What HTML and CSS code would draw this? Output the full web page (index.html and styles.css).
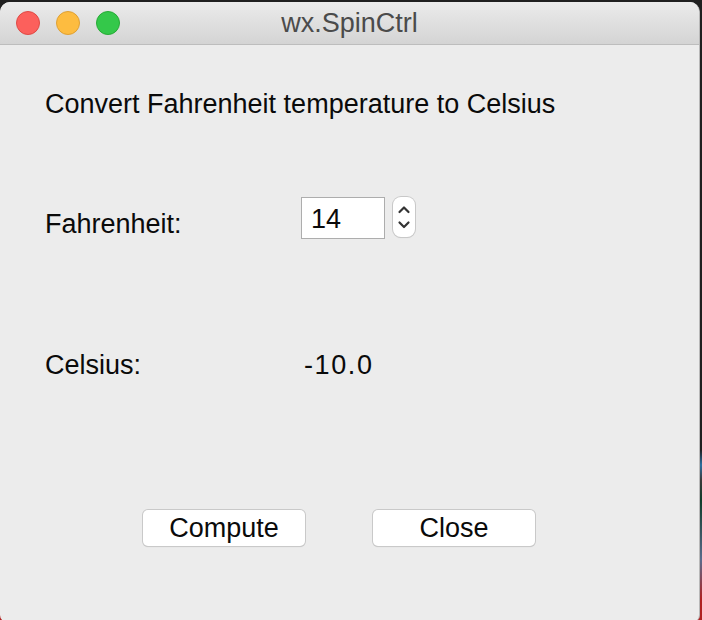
FILE: index.html
```html
<!DOCTYPE html>
<html>
<head>
<meta charset="utf-8">
<title>wx.SpinCtrl</title>
<link rel="stylesheet" href="styles.css">
</head>
<body>
<div class="desktop">
  <div class="window">
    <div class="titlebar">
      <div class="lights">
        <span class="light red"></span>
        <span class="light yellow"></span>
        <span class="light green"></span>
      </div>
      <div class="title">wx.SpinCtrl</div>
    </div>
    <div class="content">
      <div class="heading">Convert Fahrenheit temperature to Celsius</div>
      <div class="row fahr">
        <div class="label">Fahrenheit:</div>
        <div class="spinctrl">
          <div class="field">14</div>
          <div class="spin">
            <svg width="22" height="40" viewBox="0 0 22 40">
              <path d="M6.5 15 L11 10.5 L15.5 15" fill="none" stroke="#333" stroke-width="2.2" stroke-linecap="round" stroke-linejoin="round"/>
              <path d="M6.5 25.5 L11 30 L15.5 25.5" fill="none" stroke="#333" stroke-width="2.2" stroke-linecap="round" stroke-linejoin="round"/>
            </svg>
          </div>
        </div>
      </div>
      <div class="row cels">
        <div class="label">Celsius:</div>
        <div class="value">-10.0</div>
      </div>
      <div class="buttons">
        <div class="btn">Compute</div>
        <div class="btn">Close</div>
      </div>
    </div>
  </div>
</div>
</body>
</html>
```

FILE: styles.css
```css
html, body {
  margin: 0;
  padding: 0;
}
body {
  width: 702px;
  height: 620px;
  overflow: hidden;
  background: #1f1f1f;
  font-family: "Liberation Sans", Arial, sans-serif;
}
.desktop {
  width: 702px;
  height: 620px;
  padding-top: 2px;
  box-sizing: border-box;
  background: linear-gradient(to bottom, #1f1f1f 0, #1f1f1f 450px, #2d6fa0 465px, #3a3a3a 480px, #0f3d2a 500px, #5a6b8c 560px, #b02020 600px);
}
.window {
  width: 700px;
  height: 620px;
  box-sizing: border-box;
  border-right: 1px solid #b8b8b8;
  border-radius: 10px 10px 7px 7px;
  overflow: hidden;
  background: #ececec;
  display: flex;
  flex-direction: column;
}
.titlebar {
  height: 42px;
  flex: none;
  background: linear-gradient(to bottom, #ebebeb, #d4d4d4);
  border-bottom: 1px solid #bdbdbd;
  display: flex;
  align-items: center;
  position: relative;
}
.lights {
  display: flex;
  gap: 16px;
  padding-left: 16px;
}
.light {
  width: 24px;
  height: 24px;
  border-radius: 50%;
  box-sizing: border-box;
}
.red { background: #fc605c; border: 1px solid #de4a45; }
.yellow { background: #fdbc40; border: 1px solid #dea034; }
.green { background: #34c84a; border: 1px solid #27aa36; }
.title {
  position: absolute;
  left: 0;
  right: 0;
  top: 0;
  bottom: 0;
  display: flex;
  align-items: center;
  justify-content: center;
  font-size: 27px;
  color: #4b4b4b;
}
.content {
  flex: 1;
  padding: 43px 0 0 45px;
  font-size: 27px;
  color: #0a0a0a;
}
.heading {
  line-height: 32px;
}
.row {
  display: flex;
}
.label {
  width: 256px;
  line-height: 32px;
}
.fahr {
  margin-top: 77px;
  align-items: flex-start;
}
.fahr .label {
  margin-top: 11px;
}
.spinctrl {
  display: flex;
  gap: 8px;
}
.field {
  width: 84px;
  height: 42px;
  box-sizing: border-box;
  border: 1px solid #adadad;
  background: #fff;
  padding-left: 9px;
  line-height: 42px;
}
.spin {
  width: 22px;
  height: 40px;
  box-sizing: border-box;
  background: #fff;
  border-radius: 8px;
  box-shadow: 0 0 0 1px #c8c8c8, 0 1px 1px rgba(0,0,0,0.15);
  display: flex;
}
.cels {
  margin-top: 109px;
}
.value {
  line-height: 32px;
  padding-left: 3px;
  letter-spacing: 1.6px;
}
.buttons {
  margin-top: 129px;
  margin-left: 98px;
  display: flex;
  gap: 68px;
}
.btn {
  width: 162px;
  height: 36px;
  box-sizing: border-box;
  background: #fff;
  border-radius: 5px;
  box-shadow: 0 0 0 1px #c9c9c9, 0 1px 1px rgba(0,0,0,0.18);
  display: flex;
  align-items: center;
  justify-content: center;
  line-height: 36px;
}
```
